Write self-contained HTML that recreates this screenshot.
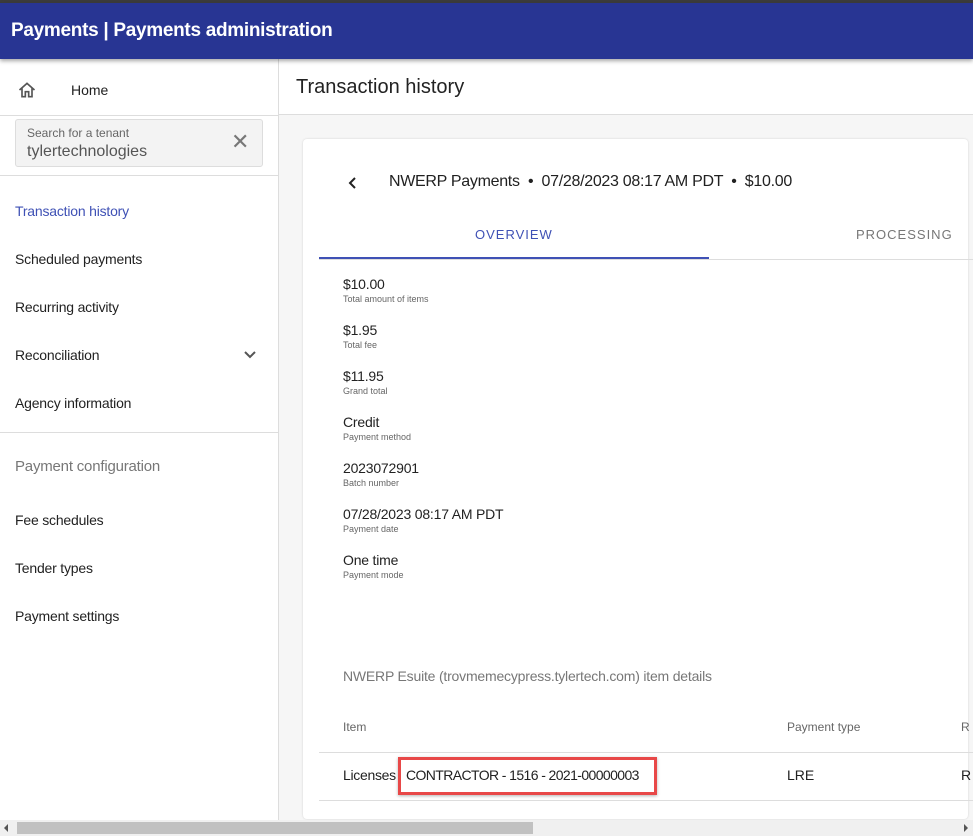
<!DOCTYPE html>
<html><head><meta charset="utf-8"><style>
*{box-sizing:border-box;margin:0;padding:0}
body{width:973px;height:836px;overflow:hidden;font-family:"Liberation Sans",Arial,sans-serif;background:#fff;position:relative;color:#212121}
.top{position:absolute;left:0;top:0;width:973px;height:3px;background:#3c3c3c}
.hdr{position:absolute;left:0;top:3px;width:973px;height:56px;background:#283593;color:#fff;font-weight:bold;font-size:19px;letter-spacing:-0.3px;padding:17px 0 0 11px;box-shadow:0 2px 4px rgba(0,0,0,.35);z-index:2}
.side{position:absolute;left:0;top:59px;width:279px;height:761px;border-right:1px solid #ddd;background:#fff}
.abs{position:absolute;white-space:nowrap}
.nav{position:absolute;left:15px;font-size:14px;color:#222;letter-spacing:-0.2px}
.main{position:absolute;left:279px;top:59px;width:694px;height:761px;background:#f6f6f6}
.card{position:absolute;left:303px;top:139px;width:665px;height:680px;background:#fff;border-radius:4px;box-shadow:0 0 2px rgba(0,0,0,.15)}
.v{position:absolute;left:343px;font-size:14px;color:#222;letter-spacing:-0.2px;white-space:nowrap}
.l{position:absolute;left:343px;font-size:9px;color:#666;white-space:nowrap}
</style></head><body>
<div class="top"></div>
<div class="hdr">Payments | Payments administration</div>
<div class="side">
 <svg class="abs" style="left:17px;top:21px" width="20" height="20" viewBox="0 0 24 24"><path d="M3 12L12 4l9 8M6 10v10h4v-6h4v6h4V10" fill="none" stroke="#555" stroke-width="2"/></svg>
 <div class="abs" style="left:71px;top:23px;font-size:14px">Home</div>
 <div class="abs" style="left:0;top:56px;width:278px;border-top:1px solid #ddd"></div>
 <div class="abs" style="left:15px;top:60px;width:248px;height:48px;background:#f3f3f3;border:1px solid #ddd;border-radius:3px">
  <div class="abs" style="left:11px;top:6px;font-size:12px;color:#666">Search for a tenant</div>
  <div class="abs" style="left:11px;top:23px;font-size:16px;color:#555">tylertechnologies</div>
  <div class="abs" style="left:215px;top:9px;font-size:22px;color:#777">✕</div>
 </div>
 <div class="abs" style="left:0;top:116px;width:278px;border-top:1px solid #ddd"></div>
 <div class="nav" style="top:144px;color:#3f51b5">Transaction history</div>
 <div class="nav" style="top:192px">Scheduled payments</div>
 <div class="nav" style="top:240px">Recurring activity</div>
 <div class="nav" style="top:288px">Reconciliation</div>
 <svg class="abs" style="left:243px;top:291px" width="14" height="10" viewBox="0 0 14 10"><path d="M2 2l5 5 5-5" fill="none" stroke="#555" stroke-width="2"/></svg>
 <div class="nav" style="top:336px">Agency information</div>
 <div class="abs" style="left:0;top:373px;width:278px;border-top:1px solid #ddd"></div>
 <div class="nav" style="top:399px;font-size:15px;color:#777">Payment configuration</div>
 <div class="nav" style="top:453px">Fee schedules</div>
 <div class="nav" style="top:501px">Tender types</div>
 <div class="nav" style="top:549px">Payment settings</div>
</div>
<div class="main">
 <div class="abs" style="left:0;top:0;width:694px;height:56px;background:#fff;border-bottom:1px solid #ddd"></div>
 <div class="abs" style="left:17px;top:17px;font-size:20px;color:#222">Transaction history</div>
</div>
<div class="card"></div>
<svg class="abs" style="left:346px;top:176px" width="12" height="14" viewBox="0 0 12 14"><path d="M9 2L4 7l5 5" fill="none" stroke="#222" stroke-width="2"/></svg>
<div class="abs" style="left:389px;top:173px;font-size:16px;letter-spacing:-0.3px">NWERP Payments &nbsp;•&nbsp; 07/28/2023 08:17 AM PDT &nbsp;•&nbsp; $10.00</div>
<div class="abs" style="left:475px;top:227px;font-size:13px;color:#3f51b5;letter-spacing:1px">OVERVIEW</div>
<div class="abs" style="left:856px;top:227px;font-size:13px;color:#777;letter-spacing:1px">PROCESSING</div>
<div class="abs" style="left:319px;top:259px;width:654px;border-top:1px solid #ddd"></div>
<div class="abs" style="left:319px;top:257px;width:390px;height:2px;background:#3f51b5"></div>
<div class="v" style="top:276px">$10.00</div><div class="l" style="top:294px">Total amount of items</div>
<div class="v" style="top:322px">$1.95</div><div class="l" style="top:340px">Total fee</div>
<div class="v" style="top:368px">$11.95</div><div class="l" style="top:386px">Grand total</div>
<div class="v" style="top:414px">Credit</div><div class="l" style="top:432px">Payment method</div>
<div class="v" style="top:460px">2023072901</div><div class="l" style="top:478px">Batch number</div>
<div class="v" style="top:506px">07/28/2023 08:17 AM PDT</div><div class="l" style="top:524px">Payment date</div>
<div class="v" style="top:552px">One time</div><div class="l" style="top:570px">Payment mode</div>
<div class="v" style="top:668px;color:#777">NWERP Esuite (trovmemecypress.tylertech.com) item details</div>
<div class="abs" style="left:343px;top:720px;font-size:12px;color:#666">Item</div>
<div class="abs" style="left:787px;top:720px;font-size:12px;color:#666">Payment type</div>
<div class="abs" style="left:961px;top:720px;font-size:12px;color:#666">R</div>
<div class="abs" style="left:319px;top:752px;width:654px;border-top:1px solid #ddd"></div>
<div class="abs" style="left:343px;top:767px;font-size:14px;letter-spacing:-0.3px">Licenses</div>
<div class="abs" style="left:398px;top:757px;width:259px;height:38px;border:3px solid #e84848;box-shadow:0 1px 3px rgba(0,0,0,.3);font-size:14px;letter-spacing:-0.6px;padding:7px 0 0 5px;background:#fff">CONTRACTOR - 1516 - 2021-00000003</div>
<div class="abs" style="left:787px;top:767px;font-size:14px">LRE</div>
<div class="abs" style="left:961px;top:767px;font-size:14px">R</div>
<div class="abs" style="left:319px;top:800px;width:654px;border-top:1px solid #ddd"></div>
<div class="abs" style="left:0;top:820px;width:973px;height:16px;background:#f0f0f0"></div>
<div class="abs" style="left:17px;top:822px;width:516px;height:12px;background:#c1c1c1"></div>
<div class="abs" style="left:4px;top:824px;width:0;height:0;border-top:4px solid transparent;border-bottom:4px solid transparent;border-right:4px solid #555"></div>
<div class="abs" style="left:964px;top:824px;width:0;height:0;border-top:4px solid transparent;border-bottom:4px solid transparent;border-left:4px solid #555"></div>
</body></html>
